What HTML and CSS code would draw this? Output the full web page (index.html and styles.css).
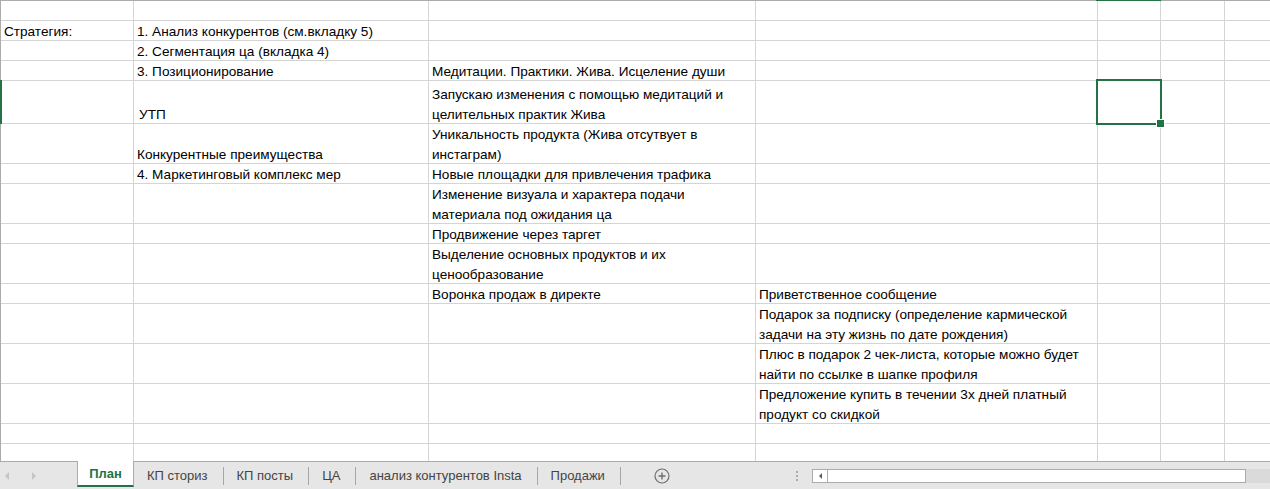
FILE: index.html
```html
<!DOCTYPE html>
<html lang="ru">
<head>
  <meta charset="UTF-8" />
  <meta name="viewport" content="width=device-width, initial-scale=1.0"/>
  <title>План</title>
  <link rel="stylesheet" href="styles.css">
</head>
<body>

  <div class="sheet">
    <div class="row-mark"></div>
    <div class="col-mark"></div>

    <div class="row"><div class="c"></div><div class="c"></div><div class="c"></div><div class="c"></div><div class="c"></div><div class="c"></div><div class="c"></div></div>
    <div class="row"><div class="c">Стратегия:</div><div class="c">1. Анализ конкурентов (см.вкладку 5)</div><div class="c"></div><div class="c"></div><div class="c"></div><div class="c"></div><div class="c"></div></div>
    <div class="row"><div class="c"></div><div class="c">2. Сегментация ца (вкладка 4)</div><div class="c"></div><div class="c"></div><div class="c"></div><div class="c"></div><div class="c"></div></div>
    <div class="row"><div class="c"></div><div class="c">3. Позиционирование</div><div class="c">Медитации. Практики. Жива. Исцеление души</div><div class="c"></div><div class="c"></div><div class="c"></div><div class="c"></div></div>
    <div class="row"><div class="c"></div><div class="c indent">УТП</div><div class="c">Запускаю изменения с помощью медитаций и<br>целительных практик Жива</div><div class="c"></div><div class="c sel"></div><div class="c"></div><div class="c"></div></div>
    <div class="row"><div class="c"></div><div class="c">Конкурентные преимущества</div><div class="c">Уникальность продукта (Жива отсутвует в<br>инстаграм)</div><div class="c"></div><div class="c"></div><div class="c"></div><div class="c"></div></div>
    <div class="row"><div class="c"></div><div class="c">4. Маркетинговый комплекс мер</div><div class="c">Новые площадки для привлечения трафика</div><div class="c"></div><div class="c"></div><div class="c"></div><div class="c"></div></div>
    <div class="row"><div class="c"></div><div class="c"></div><div class="c">Изменение визуала и характера подачи<br>материала под ожидания ца</div><div class="c"></div><div class="c"></div><div class="c"></div><div class="c"></div></div>
    <div class="row"><div class="c"></div><div class="c"></div><div class="c">Продвижение через таргет</div><div class="c"></div><div class="c"></div><div class="c"></div><div class="c"></div></div>
    <div class="row"><div class="c"></div><div class="c"></div><div class="c">Выделение основных продуктов и их<br>ценообразование</div><div class="c"></div><div class="c"></div><div class="c"></div><div class="c"></div></div>
    <div class="row"><div class="c"></div><div class="c"></div><div class="c">Воронка продаж в директе</div><div class="c">Приветственное сообщение</div><div class="c"></div><div class="c"></div><div class="c"></div></div>
    <div class="row"><div class="c"></div><div class="c"></div><div class="c"></div><div class="c">Подарок за подписку (определение кармической<br>задачи на эту жизнь по дате рождения)</div><div class="c"></div><div class="c"></div><div class="c"></div></div>
    <div class="row"><div class="c"></div><div class="c"></div><div class="c"></div><div class="c">Плюс в подарок 2 чек-листа, которые можно будет<br>найти по ссылке в шапке профиля</div><div class="c"></div><div class="c"></div><div class="c"></div></div>
    <div class="row"><div class="c"></div><div class="c"></div><div class="c"></div><div class="c">Предложение купить в течении 3х дней платный<br>продукт со скидкой</div><div class="c"></div><div class="c"></div><div class="c"></div></div>
    <div class="row"><div class="c"></div><div class="c"></div><div class="c"></div><div class="c"></div><div class="c"></div><div class="c"></div><div class="c"></div></div>
    <div class="row"><div class="c"></div><div class="c"></div><div class="c"></div><div class="c"></div><div class="c"></div><div class="c"></div><div class="c"></div></div>
  </div>

  <div class="tabbar">
    <div class="nav">
      <span class="arrow-l"></span>
      <span class="arrow-r"></span>
    </div>

    <div class="tab active">План</div>
    <div class="tab">КП сториз</div>
    <div class="tab">КП посты</div>
    <div class="tab">ЦА</div>
    <div class="tab">анализ контурентов Insta</div>
    <div class="tab">Продажи</div>

    <div class="add">
      <svg width="16" height="16" viewBox="0 0 16 16">
        <circle cx="8" cy="8" r="7" fill="none" stroke="#6f6f6f" stroke-width="1.2"/>
        <path d="M8 4.5v7M4.5 8h7" stroke="#6f6f6f" stroke-width="1.4"/>
      </svg>
    </div>

    <div class="split">
      <span></span><span></span><span></span>
    </div>

    <div class="hscroll">
      <div class="sb-btn"><span class="sb-arrow"></span></div>
      <div class="sb-thumb"></div>
      <div class="sb-track"></div>
    </div>
  </div>

</body>
</html>
```

FILE: styles.css
```css
* {
  box-sizing: border-box;
}

body {
  margin: 0;
  width: 1270px;
  height: 489px;
  overflow: hidden;
  background: #fff;
  font-family: "Liberation Sans", Arial, sans-serif;
}

/* лист */
.sheet {
  position: relative;
  height: 461px;
  display: grid;
  grid-template-columns: 132px 294px 326px 341px 62px 63px 1fr;
  grid-template-rows: 19px 19px 19px 19px 42px 39px 19px 39px 19px 39px 19px 39px 39px 39px 19px 17px;
  gap: 1px;
  background: #d4d4d4;
  border-top: 1px solid #ababab;
  border-left: 1px solid #ababab;
}

.row {
  display: contents;
}

.c {
  background: #fff;
  display: flex;
  flex-direction: column;
  justify-content: flex-end;
  padding: 0 3px;
  font-size: 13.6px;
  line-height: 20px;
  color: #000;
  white-space: nowrap;
}

/* текст в Excel сидит чуть ниже */
.c::after {
  content: "";
  margin-bottom: -2px;
}

.c.indent {
  padding-left: 5px;
}

.c.sel {
  position: relative;
  z-index: 1;
  outline: 2px solid #217346;
}

.c.sel::after {
  content: "";
  position: absolute;
  right: -5px;
  bottom: -5px;
  width: 7px;
  height: 7px;
  margin: 0;
  background: #217346;
  border: 1px solid #fff;
}

.row-mark {
  position: absolute;
  left: -1px;
  top: 79px;
  width: 2px;
  height: 44px;
  background: #217346;
  z-index: 2;
}

.col-mark {
  position: absolute;
  top: -1px;
  left: 1095px;
  width: 65px;
  height: 1px;
  background: #217346;
  z-index: 2;
}

/* ярлыки листов */
.tabbar {
  height: 28px;
  display: flex;
  align-items: center;
  background: #e6e6e6;
  border-top: 1px solid #ababab;
  font-size: 13px;
  color: #444;
}

.nav {
  width: 77px;
  display: flex;
  align-items: center;
  padding-left: 5px;
  gap: 23px;
}

.arrow-l {
  border-right: 4px solid #c4c4c4;
  border-top: 4px solid transparent;
  border-bottom: 4px solid transparent;
}

.arrow-r {
  border-left: 4px solid #c4c4c4;
  border-top: 4px solid transparent;
  border-bottom: 4px solid transparent;
}

.tab {
  display: flex;
  align-items: center;
  padding-left: 13px;
  white-space: nowrap;
}

.tab::after {
  content: "";
  width: 1px;
  height: 18px;
  margin-left: 15px;
  background: #a6a6a6;
}

.tab.active {
  align-self: flex-start;
  margin-top: -1px;
  height: 26px;
  width: 57px;
  justify-content: center;
  padding: 0;
  background: #fff;
  border-left: 1px solid #ababab;
  border-right: 1px solid #ababab;
  border-bottom: 2px solid #217346;
  color: #217346;
  font-weight: bold;
}

.tab.active::after {
  display: none;
}

.add {
  display: flex;
  margin-left: 33px;
}

.split {
  margin-left: auto;
  margin-right: 14px;
  display: flex;
  flex-direction: column;
  gap: 2px;
}

.split span {
  width: 2px;
  height: 2px;
  background: #ababab;
}

.hscroll {
  width: 458px;
  height: 14px;
  display: flex;
}

.sb-btn {
  width: 16px;
  border: 1px solid #ababab;
  background: #fff;
  display: flex;
  align-items: center;
  justify-content: center;
}

.sb-arrow {
  border-right: 3px solid #5c5c5c;
  border-top: 3px solid transparent;
  border-bottom: 3px solid transparent;
}

.sb-thumb {
  width: 418px;
  border: 1px solid #ababab;
  border-left: none;
  background: #fff;
}

.sb-track {
  flex: 1;
  background: #dadada;
}
```
